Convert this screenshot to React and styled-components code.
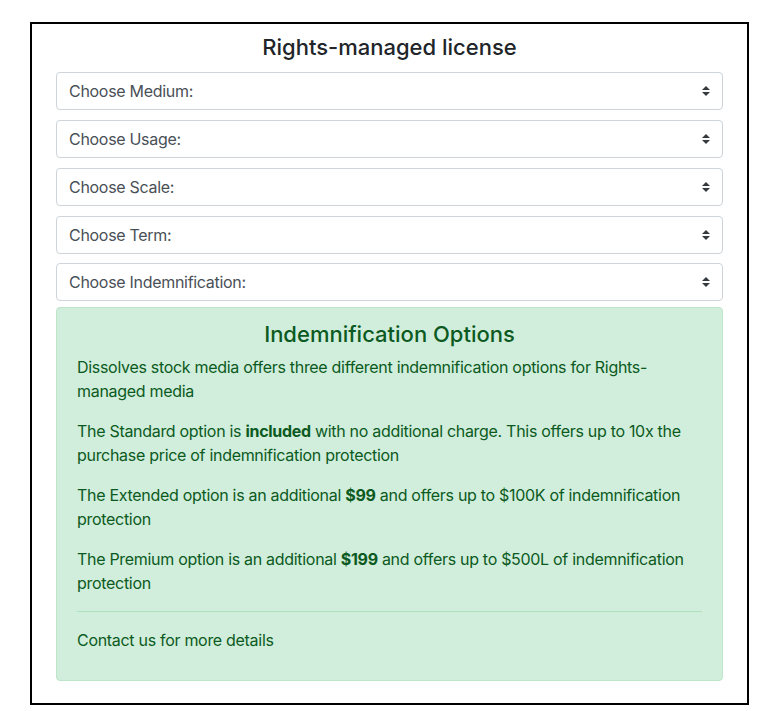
import React from "react";
import styled, { createGlobalStyle } from "styled-components";

const GlobalStyle = createGlobalStyle`
  body {
    margin: 0;
    background: #fff;
    font-family: Inter, "Liberation Sans", sans-serif;
    color: #212529;
  }
  * { box-sizing: border-box; }
`;

const selects = [
  "Choose Medium:",
  "Choose Usage:",
  "Choose Scale:",
  "Choose Term:",
  "Choose Indemnification:",
];

function App() {
  return (
    <>
      <GlobalStyle />
      <Frame>
        <Title>Rights-managed license</Title>
        <SelectList>
          {selects.map((label) => (
            <Select key={label}>
              <option>{label}</option>
            </Select>
          ))}
        </SelectList>
        <Alert>
          <AlertHeading>Indemnification Options</AlertHeading>
          <Para>
            Dissolves stock media offers three different indemnification options for
            Rights-managed media
          </Para>
          <Para>
            The Standard option is <b>included</b> with no additional charge. This offers
            up to 10x the purchase price of indemnification protection
          </Para>
          <Para>
            The Extended option is an additional <b>$99</b> and offers up to $100K of
            indemnification protection
          </Para>
          <Para>
            The Premium option is an additional <b>$199</b> and offers up to $500L of
            indemnification protection
          </Para>
          <Rule />
          <Para>Contact us for more details</Para>
        </Alert>
      </Frame>
    </>
  );
}

const Frame = styled.div`
  width: 719px;
  margin: 22px 0 0 30px;
  border: 2px solid #000;
  padding: 10px 24px 22px;
`;

const Title = styled.h4`
  margin: 0 0 12px;
  font-size: 22px;
  font-weight: 500;
  line-height: 1.2;
  text-align: center;
  color: #212529;
`;

const SelectList = styled.div`
  display: flex;
  flex-direction: column;
  gap: 9.75px;
  margin-bottom: 6px;
`;

const Select = styled.select`
  appearance: none;
  width: 100%;
  height: 38px;
  padding: 6px 28px 6px 12px;
  font-family: inherit;
  font-size: 16px;
  letter-spacing: -0.3px;
  line-height: 1.5;
  color: #495057;
  background: #fff
    url("data:image/svg+xml,%3csvg xmlns='http://www.w3.org/2000/svg' width='4' height='5' viewBox='0 0 4 5'%3e%3cpath fill='%23343a40' d='M2 0L0 2h4zm0 5L0 3h4z'/%3e%3c/svg%3e")
    no-repeat right 12px center / 8px 10px;
  border: 1px solid #ced4da;
  border-radius: 4px;
`;

const Alert = styled.div`
  padding: 13px 20px 12px;
  background: #d0eedb;
  border: 1px solid #bde5c9;
  border-radius: 4px;
  color: #0c5a22;
`;

const AlertHeading = styled.h4`
  margin: 0 0 7px;
  font-size: 22px;
  font-weight: 500;
  line-height: 1.2;
  text-align: center;
`;

const Para = styled.p`
  margin: 0 0 16px;
  font-size: 16px;
  letter-spacing: -0.3px;
  line-height: 24px;

  b {
    font-weight: 700;
  }
`;

const Rule = styled.hr`
  margin: 0 0 16px;
  border: 0;
  border-top: 1px solid #ade0bd;
`;

export default App;
